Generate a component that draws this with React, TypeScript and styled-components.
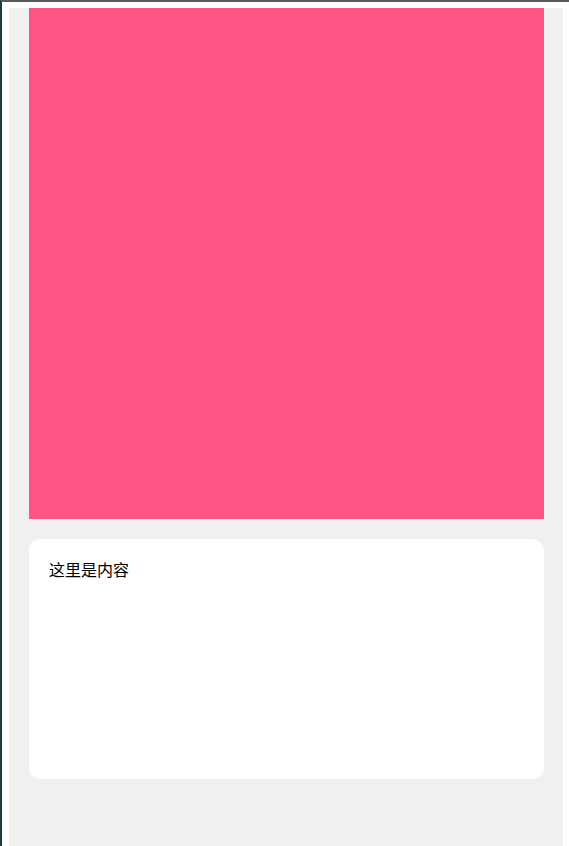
import React from "react";
import styled, { createGlobalStyle } from "styled-components";

const Global = createGlobalStyle`
  html, body { margin: 0; padding: 0; background: #ffffff; }
  body { font-family: "Noto Sans CJK SC", "Noto Sans", sans-serif; }
`;

const Frame = styled.div`
  box-sizing: border-box;
  height: 846px;
  border-left: 2px solid #1d3b40;
  border-top: 2px solid #5a5a5a;
  padding: 6px 6px 0 7px;
  display: flex;
  overflow: hidden;
`;

const Panel = styled.div`
  flex: 1;
  background: #f0f0f0;
  padding: 0 19px 0 20px;
  display: flex;
  flex-direction: column;
  gap: 20px;
`;

const Hero = styled.div`
  height: 511px;
  background: #fe5585;
`;

const Card = styled.div`
  box-sizing: border-box;
  height: 240px;
  background: #ffffff;
  border-radius: 12px;
  padding: 20px;
  font-size: 16px;
  line-height: 20px;
  color: #000;
`;

export default function App() {
  return (
    <>
      <Global />
      <Frame>
        <Panel>
          <Hero />
          <Card>这里是内容</Card>
        </Panel>
      </Frame>
    </>
  );
}
